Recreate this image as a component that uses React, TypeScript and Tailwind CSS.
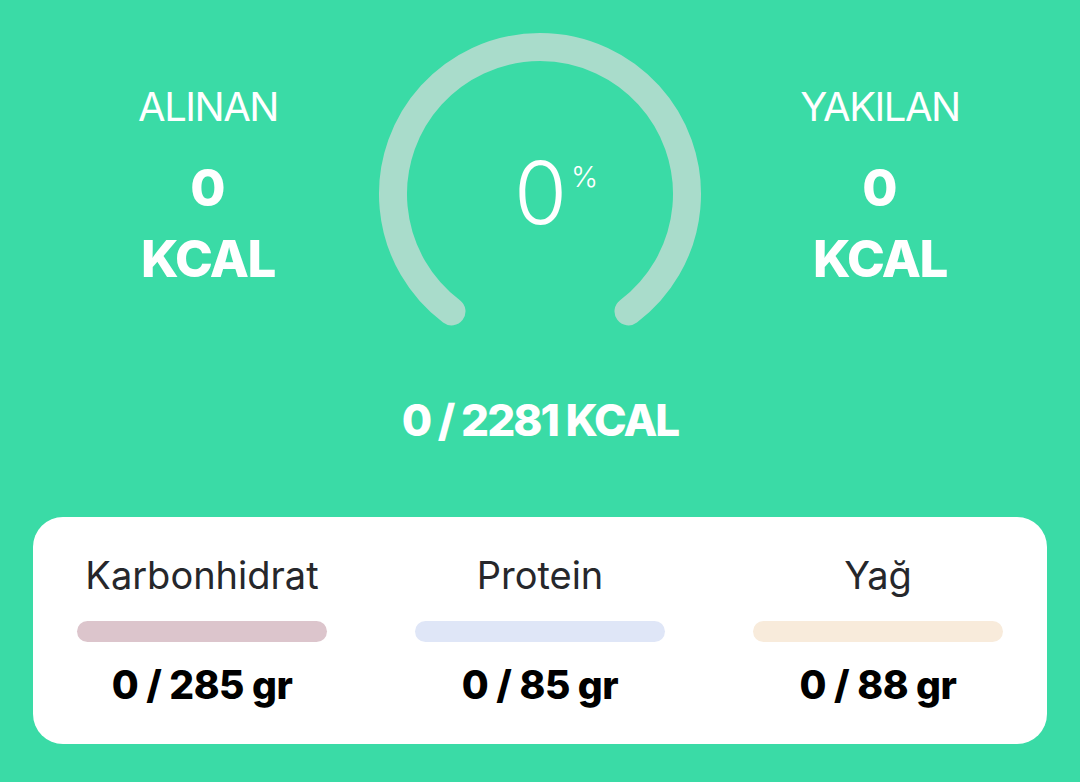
import React from "react";

const font = { fontFamily: "Inter, 'Noto Sans', sans-serif" };

function Side({ label }: { label: string }) {
  return (
    <div className="flex flex-col items-center text-white">
      <div className="mt-[83px] h-[48px] flex items-center text-[40px] font-normal tracking-[-1.5px] leading-none">{label}</div>
      <div className="mt-[32px] h-[48px] flex items-center text-[51px] font-extrabold leading-none">0</div>
      <div className="mt-[22px] h-[50px] flex items-center text-[51px] font-extrabold leading-none tracking-[-1.5px]">KCAL</div>
    </div>
  );
}

function Gauge() {
  return (
    <div className="relative mt-[20px] h-[320px] w-[334px]">
      <svg width="334" height="320" viewBox="0 0 334 320" className="block">
        <path
          d="M 75.5 291.4 A 147 147 0 1 1 252.5 291.4"
          fill="none"
          stroke="#A9DCCB"
          strokeWidth="28"
          strokeLinecap="round"
        />
      </svg>
      <div className="absolute left-[138px] top-[130px] text-white text-[86px] font-light leading-none">0</div>
      <div className="absolute left-[195px] top-[141px] h-[30px] flex items-center text-white text-[29px] font-light leading-none">%</div>
    </div>
  );
}

function Macro({ label, color, value }: { label: string; color: string; value: string }) {
  return (
    <div className="flex flex-col items-center px-[44px]">
      <div className="mt-[38px] h-[40px] flex items-center text-[38px] text-[#26272b] leading-none">{label}</div>
      <div className={`mt-[26px] h-[21px] w-full rounded-full ${color}`} />
      <div className="mt-[20px] h-[44px] flex items-center text-[39px] font-extrabold text-black leading-none tracking-[-0.5px]">{value}</div>
    </div>
  );
}

export default function App() {
  return (
    <div className="w-[1080px] h-[782px] bg-[#3ADBA6] overflow-hidden" style={font}>
      <div className="grid grid-cols-[336px_334px_340px] pl-[40px]">
        <Side label="ALINAN" />
        <Gauge />
        <Side label="YAKILAN" />
      </div>
      <div className="mt-[56px] h-[48px] flex items-center justify-center text-white text-[44px] font-extrabold leading-none tracking-[-2px]">
        <span>0 / 2281 KCAL</span>
      </div>
      <div className="mx-[33px] mt-[73px] h-[227px] rounded-[30px] bg-white grid grid-cols-3">
        <Macro label="Karbonhidrat" color="bg-[#DCC5CC]" value="0 / 285 gr" />
        <Macro label="Protein" color="bg-[#DFE6F7]" value="0 / 85 gr" />
        <Macro label="Yağ" color="bg-[#F8EBDB]" value="0 / 88 gr" />
      </div>
    </div>
  );
}
